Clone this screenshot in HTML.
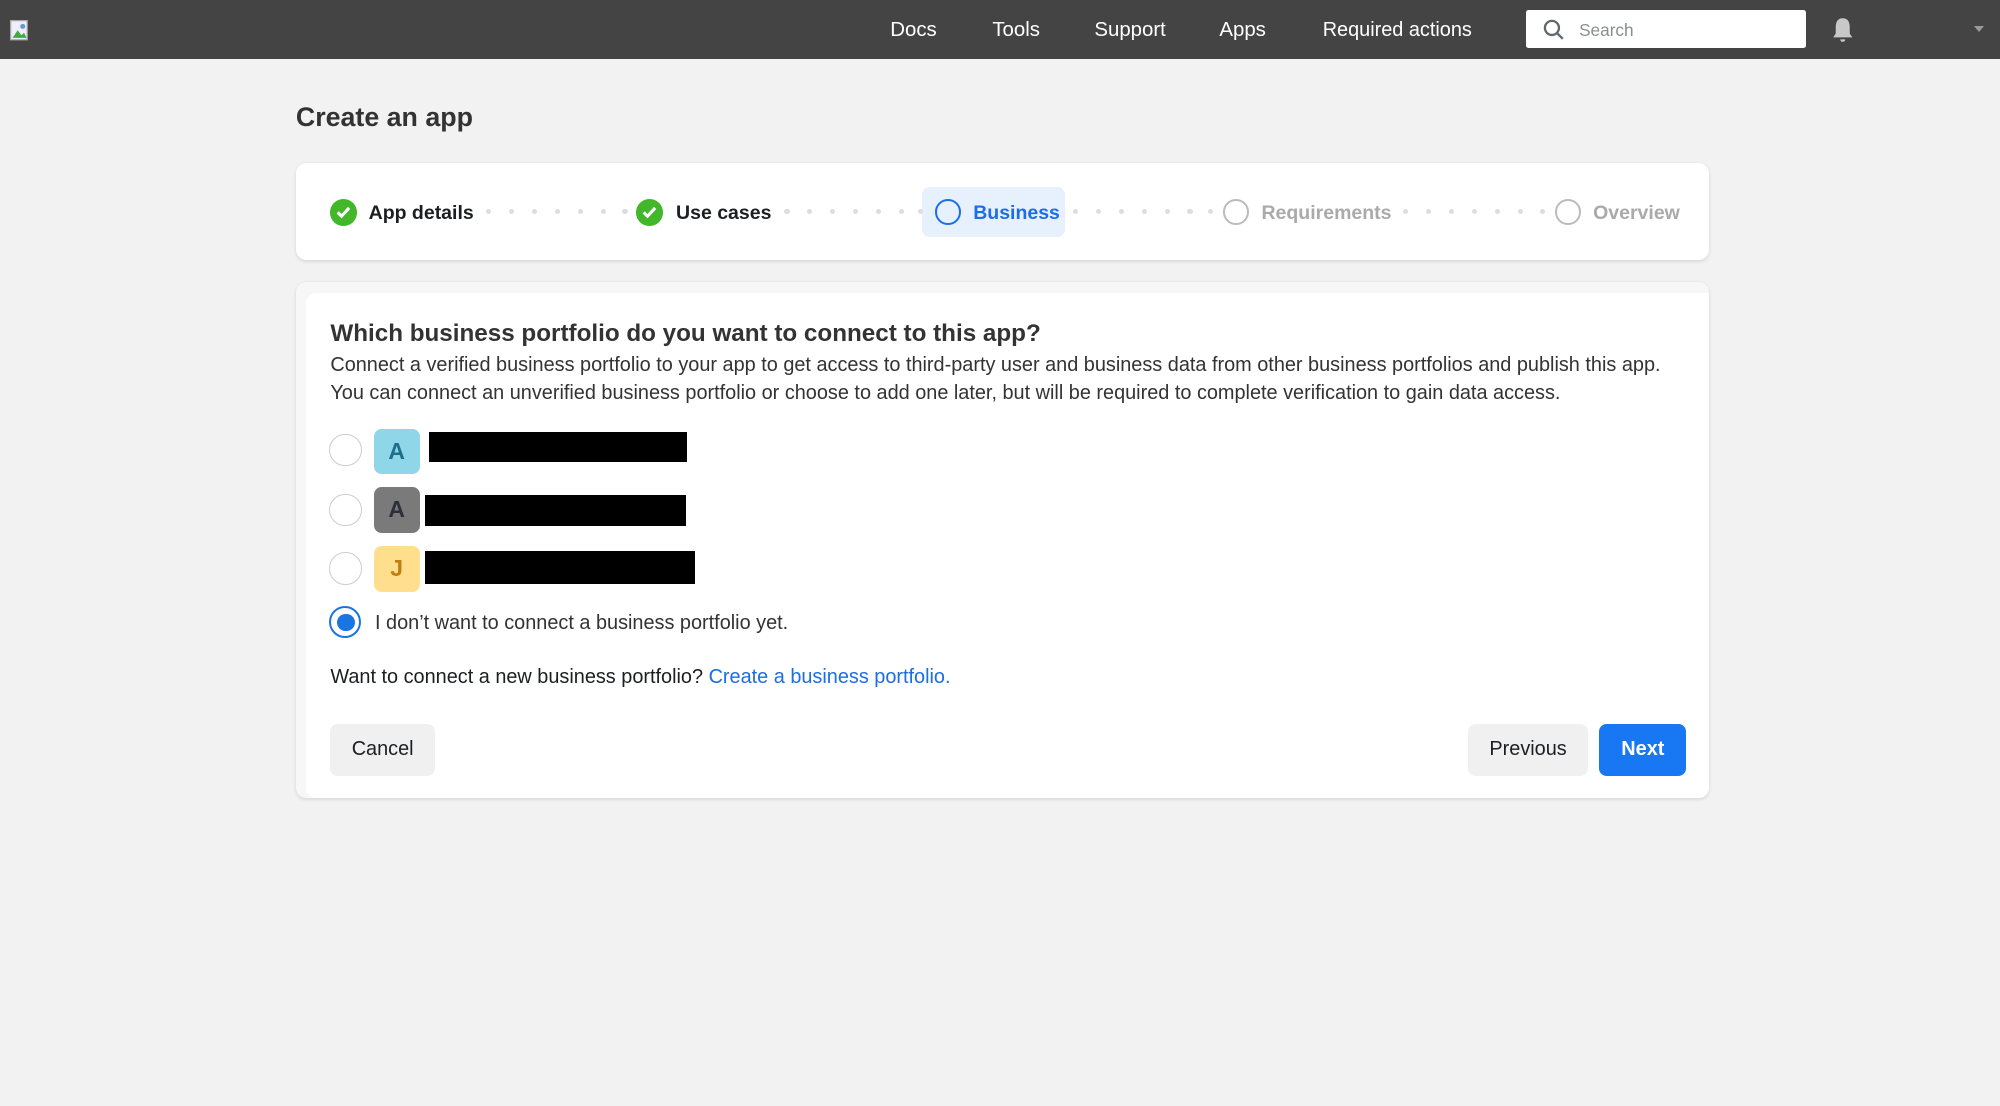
<!DOCTYPE html>
<html><head><meta charset="utf-8"><style>
html{zoom:1.27551}
body{margin:0;width:1568px;height:867px;background:#f2f2f2;font-family:"Liberation Sans",sans-serif;color:#1c1e21;position:relative;overflow:hidden}
.abs{position:absolute}
.hdr{left:0;top:0;width:1568px;height:46px;background:#444}
.nav{color:#fff;font-size:16px;top:15px}
.card{background:#fff;border-radius:8px;box-shadow:0 1px 3px rgba(0,0,0,.12)}
.step{top:158px;font-size:15.3px;font-weight:bold;color:#1c1e21}
.chk{width:21px;height:21px;border-radius:50%;background:#42b72a;top:156px}
.ring{width:17px;height:17px;border-radius:50%;border:2px solid #bbb;top:156px}
.dot{width:4px;height:4px;border-radius:50%;background:#ddd;top:164px}
.radio{width:24px;height:24px;border-radius:50%;border:1px solid #ccc;background:#fff}
.av{width:36px;height:36px;border-radius:6px;font-weight:bold;font-size:18px;text-align:center;line-height:36px}
.bar{background:#000}
.t16{font-size:15.6px}
.btn{border-radius:6px;font-size:15.6px;text-align:center;line-height:40px;height:40px;top:568px}
</style></head><body>
<div class="abs hdr"></div>
<svg class="abs" style="left:8px;top:16px" width="18" height="17" viewBox="0 0 18 17"><rect x="0.5" y="0.5" width="13" height="15" fill="#eef" stroke="#aaa"/><path d="M2 14 L6 8 L9 12 L11 10 L13 14Z" fill="#4a4"/><circle cx="10" cy="5" r="2" fill="#69c"/></svg>
<div class="abs nav" style="left:698px">Docs</div>
<div class="abs nav" style="left:778px">Tools</div>
<div class="abs nav" style="left:858px">Support</div>
<div class="abs nav" style="left:956px">Apps</div>
<div class="abs nav" style="left:1037px;font-size:15.6px">Required actions</div>
<div class="abs" style="left:1196px;top:8px;width:220px;height:30px;background:#fff;border-radius:2px"></div>
<svg class="abs" style="left:1210px;top:15px" width="17" height="17" viewBox="0 0 17 17"><circle cx="7" cy="7" r="5.5" fill="none" stroke="#606770" stroke-width="1.8"/><path d="M11 11 L15.5 15.5" stroke="#606770" stroke-width="1.8"/></svg>
<div class="abs" style="left:1238px;top:16px;font-size:13.5px;color:#8a8d91">Search</div>
<svg class="abs" style="left:1435px;top:13px" width="20" height="20" viewBox="0 0 20 20"><path d="M10 1 C6 1 4.5 4 4.5 8 L4.5 13 L2.5 16 L17.5 16 L15.5 13 L15.5 8 C15.5 4 14 1 10 1Z" fill="#c8c8c8"/><path d="M8 17.5 A2 2 0 0 0 12 17.5Z" fill="#c8c8c8"/></svg>
<div class="abs" style="left:1548px;top:20px;width:0;height:0;border-left:4px solid transparent;border-right:4px solid transparent;border-top:5px solid #999"></div>

<div class="abs" style="left:232px;top:80px;font-size:21px;font-weight:bold;color:#333">Create an app</div>

<div class="abs card" style="left:232px;top:128px;width:1108px;height:76px"></div>
<div class="abs chk" style="left:259px"></div>
<svg class="abs" style="left:259px;top:156px" width="21" height="21"><path d="M6 10.5 L9 13.5 L15 7" fill="none" stroke="#fff" stroke-width="2.4"/></svg>
<div class="abs step" style="left:289px">App details</div>
<div class="abs chk" style="left:499px"></div>
<svg class="abs" style="left:499px;top:156px" width="21" height="21"><path d="M6 10.5 L9 13.5 L15 7" fill="none" stroke="#fff" stroke-width="2.4"/></svg>
<div class="abs step" style="left:530px">Use cases</div>
<div class="abs" style="left:723px;top:147px;width:112px;height:39px;background:#e7f0fd;border-radius:6px"></div>
<div class="abs ring" style="left:733px;border-color:#1b6ee6"></div>
<div class="abs step" style="left:763px;color:#1b6ee6">Business</div>
<div class="abs ring" style="left:959px"></div>
<div class="abs step" style="left:989px;color:#aaa">Requirements</div>
<div class="abs ring" style="left:1219px"></div>
<div class="abs step" style="left:1249px;color:#aaa">Overview</div>
<div class="abs dot" style="left:381px"></div><div class="abs dot" style="left:399px"></div><div class="abs dot" style="left:417px"></div><div class="abs dot" style="left:435px"></div><div class="abs dot" style="left:453px"></div><div class="abs dot" style="left:471px"></div><div class="abs dot" style="left:488px"></div>
<div class="abs dot" style="left:615px"></div><div class="abs dot" style="left:633px"></div><div class="abs dot" style="left:651px"></div><div class="abs dot" style="left:669px"></div><div class="abs dot" style="left:687px"></div><div class="abs dot" style="left:705px"></div><div class="abs dot" style="left:720px"></div>
<div class="abs dot" style="left:841px"></div><div class="abs dot" style="left:859px"></div><div class="abs dot" style="left:877px"></div><div class="abs dot" style="left:895px"></div><div class="abs dot" style="left:913px"></div><div class="abs dot" style="left:931px"></div><div class="abs dot" style="left:947px"></div>
<div class="abs dot" style="left:1100px"></div><div class="abs dot" style="left:1118px"></div><div class="abs dot" style="left:1136px"></div><div class="abs dot" style="left:1154px"></div><div class="abs dot" style="left:1172px"></div><div class="abs dot" style="left:1190px"></div><div class="abs dot" style="left:1207px"></div>

<div class="abs card" style="left:232px;top:221px;width:1108px;height:405px;background:#f7f7f7"></div>
<div class="abs" style="left:240px;top:230px;width:1100px;height:396px;background:#fff;border-radius:8px 0 8px 8px"></div>
<div class="abs" style="left:259px;top:251px;font-size:19px;font-weight:bold;color:#333">Which business portfolio do you want to connect to this app?</div>
<div class="abs t16" style="left:259px;top:275px;line-height:22px;color:#333;width:1080px">Connect a verified business portfolio to your app to get access to third-party user and business data from other business portfolios and publish this app.<br>You can connect an unverified business portfolio or choose to add one later, but will be required to complete verification to gain data access.</div>

<div class="abs radio" style="left:258px;top:340px"></div>
<div class="abs av" style="left:293px;top:336px;background:#8fd6e8;color:#1f6f8b">A</div>
<div class="abs bar" style="left:336px;top:339px;width:203px;height:23px"></div>
<div class="abs radio" style="left:258px;top:387px"></div>
<div class="abs av" style="left:293px;top:382px;background:#7a7a7a;color:#2a2f3a">A</div>
<div class="abs bar" style="left:333px;top:388px;width:205px;height:24px"></div>
<div class="abs radio" style="left:258px;top:433px"></div>
<div class="abs av" style="left:293px;top:428px;background:#ffdf8e;color:#c07d12">J</div>
<div class="abs bar" style="left:333px;top:432px;width:212px;height:26px"></div>
<div class="abs radio" style="left:258px;top:475px;border:2px solid #1b74e4;width:22px;height:22px"></div>
<div class="abs" style="left:264px;top:481px;width:14px;height:14px;border-radius:50%;background:#1b74e4"></div>
<div class="abs t16" style="left:294px;top:480px;color:#333">I don’t want to connect a business portfolio yet.</div>
<div class="abs t16" style="left:259px;top:522px;color:#1c1e21">Want to connect a new business portfolio? <span style="color:#1b6ee6">Create a business portfolio.</span></div>

<div class="abs btn" style="left:259px;width:82px;background:#f0f0f0;color:#1c1e21">Cancel</div>
<div class="abs btn" style="left:1151px;width:94px;background:#f0f0f0;color:#1c1e21">Previous</div>
<div class="abs btn" style="left:1254px;width:68px;background:#1877f2;color:#fff;font-weight:bold">Next</div>
</body></html>
